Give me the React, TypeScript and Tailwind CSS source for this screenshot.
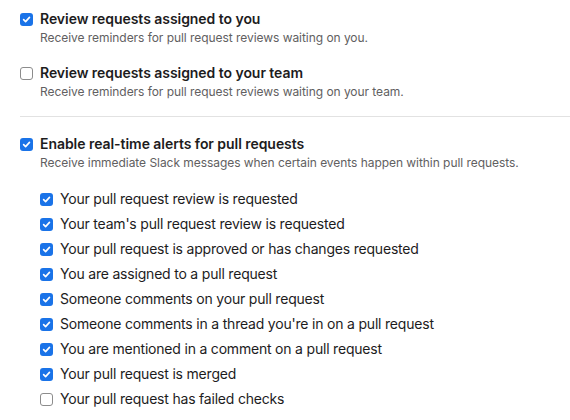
import React from 'react';

function Box({ checked }: { checked: boolean }) {
  if (!checked) {
    return <span className="w-[13px] h-[13px] shrink-0 rounded-[3px] border border-[#8c8c8c] bg-white" />;
  }
  return (
    <span className="w-[13px] h-[13px] shrink-0 rounded-[3px] bg-[#1a73e8] flex items-center justify-center">
      <svg width="9" height="9" viewBox="0 0 10 10" fill="none">
        <path d="M1.8 5.2 L4 7.4 L8.3 2.6" stroke="white" strokeWidth="1.8" strokeLinecap="round" strokeLinejoin="round" />
      </svg>
    </span>
  );
}

function Option({ checked, title, desc }: { checked: boolean; title: string; desc: string }) {
  return (
    <div className="flex">
      <div className="h-[20px] flex items-center">
        <Box checked={checked} />
      </div>
      <div className="ml-[7px]">
        <div className="text-[14px] leading-[20px] font-semibold tracking-[-0.05px] text-[#1d1c1d]">{title}</div>
        <div className="text-[12px] leading-[17px] tracking-[-0.05px] text-[#616061]">{desc}</div>
      </div>
    </div>
  );
}

const events: [string, boolean][] = [
  ['Your pull request review is requested', true],
  ["Your team's pull request review is requested", true],
  ['Your pull request is approved or has changes requested', true],
  ['You are assigned to a pull request', true],
  ['Someone comments on your pull request', true],
  ["Someone comments in a thread you're in on a pull request", true],
  ['You are mentioned in a comment on a pull request', true],
  ['Your pull request is merged', true],
  ['Your pull request has failed checks', false],
];

export default function App() {
  return (
    <div className="w-[570px] h-[420px] bg-white overflow-hidden pl-[20px] pt-[9px]" style={{ fontFamily: 'Inter, "Noto Sans", sans-serif' }}>
      <Option checked title="Review requests assigned to you" desc="Receive reminders for pull request reviews waiting on you." />
      <div className="mt-[17px]">
        <Option checked={false} title="Review requests assigned to your team" desc="Receive reminders for pull request reviews waiting on your team." />
      </div>
      <div className="h-px bg-[#e2e2e2] mt-[16px]" />
      <div className="mt-[17px]">
        <Option checked title="Enable real-time alerts for pull requests" desc="Receive immediate Slack messages when certain events happen within pull requests." />
      </div>
      <div className="pl-[20px] mt-[18px] flex flex-col gap-[5px]">
        {events.map(([label, c]) => (
          <div key={label} className="flex items-center h-[20px]">
            <Box checked={c} />
            <span className="ml-[7px] text-[14px] leading-[20px] tracking-[-0.2px] text-[#1d1c1d]">{label}</span>
          </div>
        ))}
      </div>
    </div>
  );
}
